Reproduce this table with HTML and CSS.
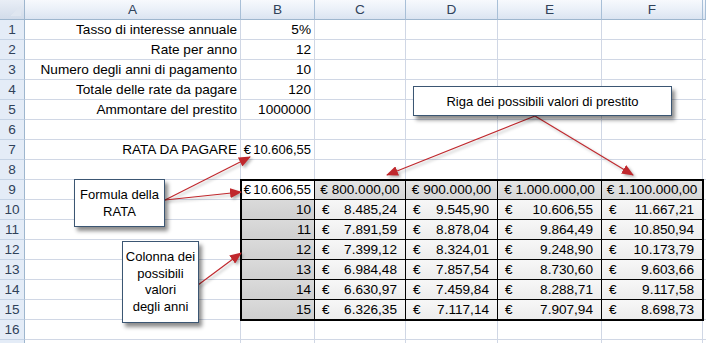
FILE: index.html
```html
<!DOCTYPE html>
<html lang="it">
<head>
<meta charset="utf-8">
<title>Rata prestito</title>
<link rel="stylesheet" href="styles.css">
</head>
<body>
<div class="page">
  <div class="sheet">
    <div class="corner"></div><div class="ch">A</div><div class="ch">B</div><div class="ch">C</div><div class="ch">D</div><div class="ch">E</div><div class="ch">F</div><div class="ch"></div>

    <div class="rh">1</div><div class="c r">Tasso di interesse annuale</div><div class="c r">5%</div><div class="c"></div><div class="c"></div><div class="c"></div><div class="c"></div><div class="c"></div>
    <div class="rh">2</div><div class="c r">Rate per anno</div><div class="c r">12</div><div class="c"></div><div class="c"></div><div class="c"></div><div class="c"></div><div class="c"></div>
    <div class="rh">3</div><div class="c r">Numero degli anni di pagamento</div><div class="c r">10</div><div class="c"></div><div class="c"></div><div class="c"></div><div class="c"></div><div class="c"></div>
    <div class="rh">4</div><div class="c r">Totale delle rate da pagare</div><div class="c r">120</div><div class="c"></div><div class="c"></div><div class="c"></div><div class="c"></div><div class="c"></div>
    <div class="rh">5</div><div class="c r">Ammontare del prestito</div><div class="c r">1000000</div><div class="c"></div><div class="c"></div><div class="c"></div><div class="c"></div><div class="c"></div>
    <div class="rh">6</div><div class="c"></div><div class="c"></div><div class="c"></div><div class="c"></div><div class="c"></div><div class="c"></div><div class="c"></div>
    <div class="rh">7</div><div class="c r">RATA DA PAGARE</div><div class="c r cur">€ 10.606,55</div><div class="c"></div><div class="c"></div><div class="c"></div><div class="c"></div><div class="c"></div>
    <div class="rh">8</div><div class="c"></div><div class="c"></div><div class="c"></div><div class="c"></div><div class="c"></div><div class="c"></div><div class="c"></div>

    <div class="rh">9</div><div class="c"></div><div class="c t b9 r cur">€ 10.606,55</div>
    <div class="c t hd">€ 800.000,00</div>
    <div class="c t hd">€ 900.000,00</div>
    <div class="c t hd">€ 1.000.000,00</div>
    <div class="c t hd">€ 1.100.000,00</div><div class="c"></div>

    <div class="rh">10</div><div class="c"></div><div class="c t yr r">10</div>
    <div class="c t v acc"><span>€</span><span>8.485,24</span></div>
    <div class="c t v acc"><span>€</span><span>9.545,90</span></div>
    <div class="c t v acc"><span>€</span><span>10.606,55</span></div>
    <div class="c t v acc"><span>€</span><span>11.667,21</span></div><div class="c"></div>

    <div class="rh">11</div><div class="c"></div><div class="c t yr r">11</div>
    <div class="c t v acc"><span>€</span><span>7.891,59</span></div>
    <div class="c t v acc"><span>€</span><span>8.878,04</span></div>
    <div class="c t v acc"><span>€</span><span>9.864,49</span></div>
    <div class="c t v acc"><span>€</span><span>10.850,94</span></div><div class="c"></div>

    <div class="rh">12</div><div class="c"></div><div class="c t yr r">12</div>
    <div class="c t v acc"><span>€</span><span>7.399,12</span></div>
    <div class="c t v acc"><span>€</span><span>8.324,01</span></div>
    <div class="c t v acc"><span>€</span><span>9.248,90</span></div>
    <div class="c t v acc"><span>€</span><span>10.173,79</span></div><div class="c"></div>

    <div class="rh">13</div><div class="c"></div><div class="c t yr r">13</div>
    <div class="c t v acc"><span>€</span><span>6.984,48</span></div>
    <div class="c t v acc"><span>€</span><span>7.857,54</span></div>
    <div class="c t v acc"><span>€</span><span>8.730,60</span></div>
    <div class="c t v acc"><span>€</span><span>9.603,66</span></div><div class="c"></div>

    <div class="rh">14</div><div class="c"></div><div class="c t yr r">14</div>
    <div class="c t v acc"><span>€</span><span>6.630,97</span></div>
    <div class="c t v acc"><span>€</span><span>7.459,84</span></div>
    <div class="c t v acc"><span>€</span><span>8.288,71</span></div>
    <div class="c t v acc"><span>€</span><span>9.117,58</span></div><div class="c"></div>

    <div class="rh">15</div><div class="c"></div><div class="c t yr r">15</div>
    <div class="c t v acc"><span>€</span><span>6.326,35</span></div>
    <div class="c t v acc"><span>€</span><span>7.117,14</span></div>
    <div class="c t v acc"><span>€</span><span>7.907,94</span></div>
    <div class="c t v acc"><span>€</span><span>8.698,73</span></div><div class="c"></div>

    <div class="rh">16</div><div class="c"></div><div class="c"></div><div class="c"></div><div class="c"></div><div class="c"></div><div class="c"></div><div class="c"></div>
    <div class="rh"></div><div class="c"></div><div class="c"></div><div class="c"></div><div class="c"></div><div class="c"></div><div class="c"></div><div class="c"></div>

    <div class="frame"></div>
  </div>

  <svg class="arrows" width="706" height="343" viewBox="0 0 706 343">
    <defs>
      <marker id="ah" markerUnits="userSpaceOnUse" markerWidth="12" markerHeight="10" refX="11" refY="5" orient="auto">
        <path d="M0,0 L12,5 L0,10 Z" fill="#c0282d"/>
      </marker>
    </defs>
    <g stroke="#c0282d" stroke-width="1.1" fill="none" marker-end="url(#ah)">
      <line x1="165" y1="200" x2="250" y2="157"/>
      <line x1="165" y1="200" x2="241" y2="192"/>
      <line x1="535" y1="116" x2="387" y2="175"/>
      <line x1="535" y1="116" x2="633" y2="175"/>
      <line x1="198" y1="285" x2="241" y2="253"/>
    </g>
  </svg>

  <div class="callout riga">Riga dei possibili valori di prestito</div>
  <div class="callout formula">Formula della<br>RATA</div>
  <div class="callout colonna">Colonna dei<br>possibili<br>valori<br>degli anni</div>
</div>
</body>
</html>
```
FILE: styles.css
```css
html, body {
  margin: 0;
  padding: 0;
  background: #ffffff;
}

.page {
  position: relative;
  width: 706px;
  height: 343px;
  overflow: hidden;
  font-family: "Liberation Sans", Arial, sans-serif;
}

.sheet {
  position: relative;
  display: grid;
  grid-template-columns: 25px 216px 74px 91px 92px 104px 101px 3px;
  grid-template-rows: 20px repeat(17, 20px);
  font-size: 13.6px;
  color: #000;
}

.sheet > div {
  box-sizing: border-box;
}

.corner {
  background:
    linear-gradient(135deg, transparent 55%, #dfe6f0 55%) no-repeat right 3px bottom 3px / 12px 12px,
    linear-gradient(#e9eef6, #d2dcea);
  border-right: 1px solid #9eb6ce;
  border-bottom: 1px solid #9eb6ce;
}

.ch {
  background: linear-gradient(#f7f9fd 0%, #eaf0f8 50%, #dbe4f1 100%);
  border-right: 1px solid #a8bfd7;
  border-bottom: 1px solid #9eb6ce;
  display: flex;
  align-items: center;
  justify-content: center;
  color: #30425a;
  font-size: 13.6px;
}

.rh {
  background: #e4ecf7;
  border-right: 1px solid #9eb6ce;
  border-bottom: 1px solid #c5d3e5;
  display: flex;
  align-items: center;
  justify-content: center;
  color: #30425a;
  font-size: 13.6px;
}

.c {
  border-right: 1px solid #d0d7e5;
  border-bottom: 1px solid #d0d7e5;
  display: flex;
  align-items: center;
  padding: 0 3px;
  white-space: nowrap;
  overflow: visible;
}

.r {
  justify-content: flex-end;
}

.cur {
  font-size: 13px;
  word-spacing: -1.5px;
}

.t {
  border-right: 1px solid #000;
  border-bottom: 1px solid #000;
}

.b9 {
  background: #ffffff;
}

.hd {
  background: linear-gradient(#e6e6e6, #d6d6d6);
  justify-content: center;
  padding: 0 2px;
}

.yr {
  background: linear-gradient(#dadada, #cfcfcf);
}

.v {
  background: linear-gradient(#f7f7f7, #ececec);
}

.acc {
  justify-content: space-between;
  padding: 0 8px 0 7px;
}

.frame {
  position: absolute;
  grid-row: 10 / 17;
  grid-column: 3 / 8;
  top: -1px;
  left: -1px;
  right: -1px;
  bottom: -1px;
  border: 2px solid #000;
  pointer-events: none;
}

.arrows {
  position: absolute;
  left: 0;
  top: 0;
  pointer-events: none;
  filter: drop-shadow(2px 2px 1.5px rgba(0, 0, 0, 0.3));
}

.callout {
  position: absolute;
  box-sizing: border-box;
  background: #ffffff;
  border: 1px solid #3b5673;
  box-shadow: 3px 4px 4px rgba(0, 0, 0, 0.45);
  font-family: "Liberation Sans", Arial, sans-serif;
  font-size: 13px;
  color: #000;
  text-align: center;
  display: flex;
  align-items: center;
  justify-content: center;
}

.riga {
  left: 413px;
  top: 86px;
  width: 259px;
  height: 30px;
}

.formula {
  left: 74px;
  top: 179px;
  width: 91px;
  height: 48px;
  line-height: 17px;
}

.colonna {
  left: 122px;
  top: 241px;
  width: 77px;
  height: 82px;
  line-height: 16.5px;
}
```
